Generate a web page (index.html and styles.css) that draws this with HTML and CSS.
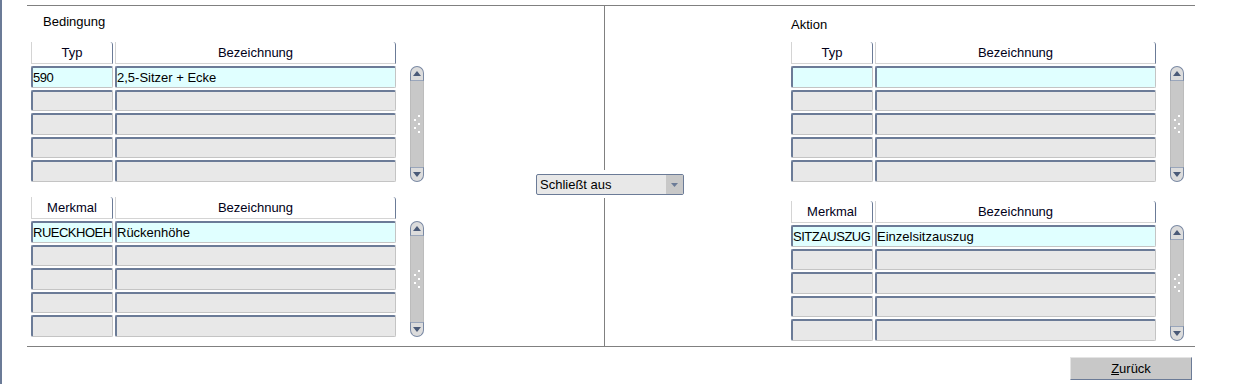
FILE: index.html
```html
<!DOCTYPE html>
<html lang="de">
<head>
<meta charset="utf-8">
<title>Regel</title>
<link rel="stylesheet" href="styles.css">
</head>
<body>
<div class="page">
  <div class="panel">
    <div class="col col-left">
      <div class="label label-left">Bedingung</div>
      <div class="block">
        <div class="grid">
          <div class="hdr hdr-a">Typ</div><div class="hdr hdr-b">Bezeichnung</div>
          <div class="rows">
            <div class="row"><div class="fld fld-a act">590</div><div class="fld fld-b act">2,5-Sitzer + Ecke</div></div>
            <div class="row"><div class="fld fld-a"></div><div class="fld fld-b"></div></div>
            <div class="row"><div class="fld fld-a"></div><div class="fld fld-b"></div></div>
            <div class="row"><div class="fld fld-a"></div><div class="fld fld-b"></div></div>
            <div class="row"><div class="fld fld-a"></div><div class="fld fld-b"></div></div>
          </div>
        </div>
        <div class="sb">
          <div class="sb-btn sb-up"><svg width="8" height="5" viewBox="0 0 8 5"><path d="M0 5 L4 0 L8 5 Z" fill="#4a5a78"/></svg></div>
          <div class="sb-track"><svg width="8" height="18" viewBox="0 0 8 18"><rect x="5" y="0" width="2" height="2" fill="#fff"/><rect x="1" y="4" width="2" height="2" fill="#fff"/><rect x="5" y="8" width="2" height="2" fill="#fff"/><rect x="1" y="12" width="2" height="2" fill="#fff"/><rect x="5" y="16" width="2" height="2" fill="#fff"/></svg></div>
          <div class="sb-btn sb-down"><svg width="8" height="5" viewBox="0 0 8 5"><path d="M0 0 L4 5 L8 0 Z" fill="#4a5a78"/></svg></div>
        </div>
      </div>
      <div class="block block-low-left">
        <div class="grid">
          <div class="hdr hdr-a">Merkmal</div><div class="hdr hdr-b">Bezeichnung</div>
          <div class="rows">
            <div class="row"><div class="fld fld-a act">RUECKHOEHE</div><div class="fld fld-b act">Rückenhöhe</div></div>
            <div class="row"><div class="fld fld-a"></div><div class="fld fld-b"></div></div>
            <div class="row"><div class="fld fld-a"></div><div class="fld fld-b"></div></div>
            <div class="row"><div class="fld fld-a"></div><div class="fld fld-b"></div></div>
            <div class="row"><div class="fld fld-a"></div><div class="fld fld-b"></div></div>
          </div>
        </div>
        <div class="sb">
          <div class="sb-btn sb-up"><svg width="8" height="5" viewBox="0 0 8 5"><path d="M0 5 L4 0 L8 5 Z" fill="#4a5a78"/></svg></div>
          <div class="sb-track"><svg width="8" height="18" viewBox="0 0 8 18"><rect x="5" y="0" width="2" height="2" fill="#fff"/><rect x="1" y="4" width="2" height="2" fill="#fff"/><rect x="5" y="8" width="2" height="2" fill="#fff"/><rect x="1" y="12" width="2" height="2" fill="#fff"/><rect x="5" y="16" width="2" height="2" fill="#fff"/></svg></div>
          <div class="sb-btn sb-down"><svg width="8" height="5" viewBox="0 0 8 5"><path d="M0 0 L4 5 L8 0 Z" fill="#4a5a78"/></svg></div>
        </div>
      </div>
    </div>

    <div class="col col-mid">
      <div class="vline vline-top"></div>
      <div class="select">
        <span class="select-text">Schließt aus</span>
        <span class="select-btn"><svg width="7" height="4" viewBox="0 0 7 4"><path d="M0 0 L3.5 4 L7 0 Z" fill="#6b7b97"/></svg></span>
      </div>
      <div class="vline vline-bottom"></div>
    </div>

    <div class="col col-right">
      <div class="label label-right">Aktion</div>
      <div class="block">
        <div class="grid">
          <div class="hdr hdr-a">Typ</div><div class="hdr hdr-b">Bezeichnung</div>
          <div class="rows">
            <div class="row"><div class="fld fld-a act"></div><div class="fld fld-b act"></div></div>
            <div class="row"><div class="fld fld-a"></div><div class="fld fld-b"></div></div>
            <div class="row"><div class="fld fld-a"></div><div class="fld fld-b"></div></div>
            <div class="row"><div class="fld fld-a"></div><div class="fld fld-b"></div></div>
            <div class="row"><div class="fld fld-a"></div><div class="fld fld-b"></div></div>
          </div>
        </div>
        <div class="sb">
          <div class="sb-btn sb-up"><svg width="8" height="5" viewBox="0 0 8 5"><path d="M0 5 L4 0 L8 5 Z" fill="#4a5a78"/></svg></div>
          <div class="sb-track"><svg width="8" height="18" viewBox="0 0 8 18"><rect x="5" y="0" width="2" height="2" fill="#fff"/><rect x="1" y="4" width="2" height="2" fill="#fff"/><rect x="5" y="8" width="2" height="2" fill="#fff"/><rect x="1" y="12" width="2" height="2" fill="#fff"/><rect x="5" y="16" width="2" height="2" fill="#fff"/></svg></div>
          <div class="sb-btn sb-down"><svg width="8" height="5" viewBox="0 0 8 5"><path d="M0 0 L4 5 L8 0 Z" fill="#4a5a78"/></svg></div>
        </div>
      </div>
      <div class="block block-low-right">
        <div class="grid">
          <div class="hdr hdr-a">Merkmal</div><div class="hdr hdr-b">Bezeichnung</div>
          <div class="rows">
            <div class="row"><div class="fld fld-a act">SITZAUSZUG</div><div class="fld fld-b act">Einzelsitzauszug</div></div>
            <div class="row"><div class="fld fld-a"></div><div class="fld fld-b"></div></div>
            <div class="row"><div class="fld fld-a"></div><div class="fld fld-b"></div></div>
            <div class="row"><div class="fld fld-a"></div><div class="fld fld-b"></div></div>
            <div class="row"><div class="fld fld-a"></div><div class="fld fld-b"></div></div>
          </div>
        </div>
        <div class="sb">
          <div class="sb-btn sb-up"><svg width="8" height="5" viewBox="0 0 8 5"><path d="M0 5 L4 0 L8 5 Z" fill="#4a5a78"/></svg></div>
          <div class="sb-track"><svg width="8" height="18" viewBox="0 0 8 18"><rect x="5" y="0" width="2" height="2" fill="#fff"/><rect x="1" y="4" width="2" height="2" fill="#fff"/><rect x="5" y="8" width="2" height="2" fill="#fff"/><rect x="1" y="12" width="2" height="2" fill="#fff"/><rect x="5" y="16" width="2" height="2" fill="#fff"/></svg></div>
          <div class="sb-btn sb-down"><svg width="8" height="5" viewBox="0 0 8 5"><path d="M0 0 L4 5 L8 0 Z" fill="#4a5a78"/></svg></div>
        </div>
      </div>
    </div>
  </div>
  <div class="footer">
    <button class="btn" type="button"><span class="u">Z</span>urück</button>
  </div>
</div>
</body>
</html>
```

FILE: styles.css
```css
* { box-sizing: border-box; }
html, body { margin: 0; padding: 0; background: #fff; }
body {
  font-family: "Liberation Sans", Arial, sans-serif;
  font-size: 13px;
  color: #000;
}
.page {
  height: 384px;
  border-left: 2px solid #6b7b97;
  padding-top: 5px;
}
.panel {
  margin-left: 25px;
  width: 1168px;
  height: 342px;
  border-top: 1px solid #808080;
  border-bottom: 1px solid #808080;
  display: flex;
}
.col { display: flex; flex-direction: column; }
.col-left { width: 509px; padding-left: 4px; }
.col-mid { width: 148px; }
.col-right { width: 511px; padding-left: 107px; }

.label { height: 15px; line-height: 15px; }
.label-left { margin: 8px 0 13px 12px; }
.label-right { margin: 11px 0 10px 0; }

.block { display: flex; align-items: flex-start; }
.block-low-left { margin-top: 15.5px; }
.block-low-right { margin-top: 19.5px; }

.grid {
  display: grid;
  grid-template-columns: 82px 281px;
  column-gap: 2px;
}
.hdr {
  height: 22px;
  line-height: 22px;
  text-align: center;
  border-right: 1px solid #6b7b97;
  border-left: 1px solid #d4d4d4;
  border-bottom: 1px solid #d4d4d4;
  border-top-right-radius: 3px;
  margin-bottom: 2px;
  color: #000018;
}
.rows {
  grid-column: 1 / 3;
  display: flex;
  flex-direction: column;
  gap: 2px;
}
.row {
  display: grid;
  grid-template-columns: 82px 281px;
  column-gap: 2px;
}
.fld {
  height: 21.5px;
  line-height: 19px;
  padding-left: 0;
  background: #e8e8e8;
  border-top: 2px solid #6b7b97;
  border-left: 2px solid #6b7b97;
  border-right: 1px solid #c4c4c4;
  border-bottom: 1px solid #c4c4c4;
  border-radius: 2px;
  white-space: nowrap;
  overflow: hidden;
}
.fld-a { letter-spacing: -0.5px; }
.fld.act { background: #e0ffff; }

.sb {
  margin-left: 14px;
  margin-top: 24px;
  width: 14px;
  height: 115.5px;
  display: flex;
  flex-direction: column;
}
.sb-btn {
  height: 15px;
  display: flex;
  align-items: center;
  justify-content: center;
  background: #dcdcdc;
  border: 1px solid #7b8aa4;
}
.sb-up { border-radius: 7px 7px 0 0; border-bottom: 1px solid #9aa6bb; }
.sb-down { border-radius: 0 0 7px 7px; border-top: 1px solid #9aa6bb; }
.sb-track {
  flex: 1;
  background: #c8c8c8;
  border-left: 1px solid #bcbcbc;
  border-right: 1px solid #bcbcbc;
  display: flex;
  align-items: center;
  justify-content: center;
}

.vline { width: 1px; background: #808080; margin-left: 68px; }
.vline-top { height: 164px; }
.vline-bottom { flex: 1; margin-top: 3px; }
.select {
  margin-top: 4px;
  height: 21px;
  border: 1px solid #6b7b97;
  border-radius: 2px;
  background: #e8e8e8;
  display: flex;
  align-items: stretch;
}
.select-text { flex: 1; line-height: 19px; padding-left: 3px; }
.select-btn {
  width: 17px;
  background: #c8c8c8;
  display: flex;
  align-items: center;
  justify-content: center;
}

.footer {
  width: 1190px;
  display: flex;
  justify-content: flex-end;
  padding-top: 10px;
}
.btn {
  width: 122px;
  height: 23px;
  padding: 0;
  font-family: "Liberation Sans", Arial, sans-serif;
  font-size: 13px;
  color: #000;
  background: #c8c8c8;
  border-top: 1px solid #e4e4e4;
  border-left: 1px solid #e4e4e4;
  border-right: 1px solid #6b7b97;
  border-bottom: 1px solid #6b7b97;
}
.u { text-decoration: underline; }
```
